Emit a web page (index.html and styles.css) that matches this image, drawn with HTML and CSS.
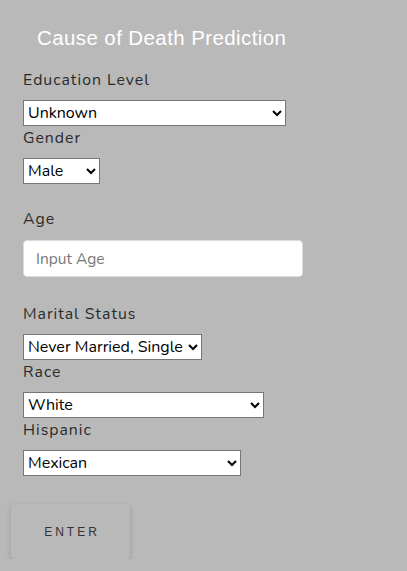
FILE: index.html
```
<!DOCTYPE html>
<html>
<head>
<meta charset="utf-8">
<link rel="stylesheet" href="styles.css">
</head>
<body>
<div class="page">
  <h1 class="title">Cause of Death Prediction</h1>
  <form class="form">
    <label class="lbl">Education Level</label>
    <select class="sel w-edu"><option>Unknown</option></select>
    <label class="lbl">Gender</label>
    <select class="sel w-gen"><option>Male</option></select>
    <label class="lbl lbl-age">Age</label>
    <input class="inp" type="text" placeholder="Input Age">
    <label class="lbl lbl-mar">Marital Status</label>
    <select class="sel w-mar"><option>Never Married, Single</option></select>
    <label class="lbl">Race</label>
    <select class="sel w-race"><option>White</option></select>
    <label class="lbl">Hispanic</label>
    <select class="sel w-his"><option>Mexican</option></select>
    <button type="button" class="btn">ENTER</button>
  </form>
</div>
</body>
</html>
```
FILE: styles.css
```
html, body {
  margin: 0;
  padding: 0;
  background: #b9b9b9;
}
.page {
  padding: 0 0 0 23px;
  font-family: "Nunito", "Open Sans", sans-serif;
}
.title {
  margin: 0;
  padding: 26px 0 0 14px;
  font-family: "Liberation Sans", Arial, sans-serif;
  font-weight: normal;
  font-size: 20.5px;
  line-height: 24px;
  color: #ffffff;
  letter-spacing: 0.4px;
}
.form {
  display: flex;
  flex-direction: column;
  align-items: flex-start;
  padding-top: 18px;
}
.lbl {
  display: block;
  font-size: 15.8px;
  line-height: 24px;
  letter-spacing: 1px;
  color: #2a2a2a;
  margin-bottom: 8px;
}
.lbl-age { margin-top: 23px; margin-bottom: 9px; }
.lbl-mar { margin-top: 25px; }
.sel {
  height: 26px;
  margin: 0;
  font-family: "Nunito", "Open Sans", sans-serif;
  font-size: 16px;
  color: #000;
  background: #fff;
  border: 1px solid #767676;
  border-radius: 0;
  padding: 0 1px 0 0;
}
.w-edu { width: 263px; }
.w-gen { width: 77px; }
.w-mar { width: 179px; }
.w-race { width: 241px; }
.w-his { width: 218px; }
.inp {
  box-sizing: border-box;
  width: 280px;
  height: 37px;
  margin: 0;
  border: 1px solid #dcdcdc;
  border-radius: 4px;
  padding: 0 12px;
  font-family: "Nunito", "Open Sans", sans-serif;
  font-size: 15.5px;
  background: #fff;
}
.inp::placeholder { color: #777; }
.btn {
  margin: 28px 0 0 -12px;
  width: 119px;
  height: 55px;
  border: none;
  border-radius: 4px;
  background: #b9b9b9;
  box-shadow: 0 2px 5px rgba(0,0,0,0.18);
  font-family: "Liberation Sans", Arial, sans-serif;
  font-size: 12px;
  letter-spacing: 3px;
  color: #333;
  padding: 0 0 0 3px;
}
```
